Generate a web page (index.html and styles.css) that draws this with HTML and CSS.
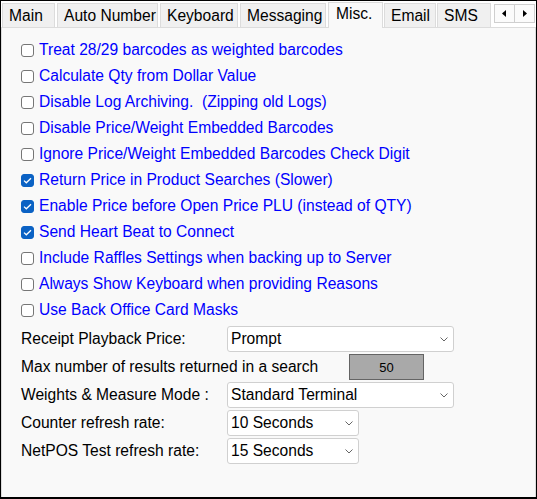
FILE: index.html
```html
<!DOCTYPE html>
<html>
<head>
<meta charset="utf-8">
<link rel="stylesheet" href="styles.css">
</head>
<body>
<div class="frame">
  <div class="tabstrip">
    <div class="tab t-main">Main</div>
    <div class="tab t-auto">Auto Number</div>
    <div class="tab t-key">Keyboard</div>
    <div class="tab t-msg">Messaging</div>
    <div class="tab t-misc active">Misc.</div>
    <div class="tab t-email">Email</div>
    <div class="tab t-sms">SMS</div>
    <div class="scroller">
      <div class="sbtn"><svg width="5" height="7" viewBox="0 0 5 7"><path d="M4 0L0 3.5L4 7Z" fill="#000"/></svg></div>
      <div class="sbtn"><svg width="5" height="7" viewBox="0 0 5 7"><path d="M1 0L5 3.5L1 7Z" fill="#000"/></svg></div>
    </div>
  </div>
  <div class="panel">
    <div class="checks">
      <div class="crow"><span class="cb"></span><span class="ctext">Treat 28/29 barcodes as weighted barcodes</span></div>
      <div class="crow"><span class="cb"></span><span class="ctext">Calculate Qty from Dollar Value</span></div>
      <div class="crow"><span class="cb"></span><span class="ctext">Disable Log Archiving.&nbsp; (Zipping old Logs)</span></div>
      <div class="crow"><span class="cb"></span><span class="ctext">Disable Price/Weight Embedded Barcodes</span></div>
      <div class="crow"><span class="cb"></span><span class="ctext">Ignore Price/Weight Embedded Barcodes Check Digit</span></div>
      <div class="crow"><span class="cb on"><svg width="9" height="7" viewBox="0 0 9 7"><path d="M1 3.6L3.3 5.8L8 1.2" fill="none" stroke="#fff" stroke-width="1.3"/></svg></span><span class="ctext">Return Price in Product Searches (Slower)</span></div>
      <div class="crow"><span class="cb on"><svg width="9" height="7" viewBox="0 0 9 7"><path d="M1 3.6L3.3 5.8L8 1.2" fill="none" stroke="#fff" stroke-width="1.3"/></svg></span><span class="ctext">Enable Price before Open Price PLU (instead of QTY)</span></div>
      <div class="crow"><span class="cb on"><svg width="9" height="7" viewBox="0 0 9 7"><path d="M1 3.6L3.3 5.8L8 1.2" fill="none" stroke="#fff" stroke-width="1.3"/></svg></span><span class="ctext">Send Heart Beat to Connect</span></div>
      <div class="crow"><span class="cb"></span><span class="ctext">Include Raffles Settings when backing up to Server</span></div>
      <div class="crow"><span class="cb"></span><span class="ctext">Always Show Keyboard when providing Reasons</span></div>
      <div class="crow"><span class="cb"></span><span class="ctext">Use Back Office Card Masks</span></div>
    </div>
    <div class="form">
      <div class="frow">
        <span class="label">Receipt Playback Price:</span>
        <div class="select wide"><span>Prompt</span><svg class="chev" width="8" height="5" viewBox="0 0 8 5"><path d="M0.5 0.5L4 4L7.5 0.5" fill="none" stroke="#666" stroke-width="1"/></svg></div>
      </div>
      <div class="frow">
        <span class="label long">Max number of results returned in a search</span>
        <div class="numbox">50</div>
      </div>
      <div class="frow">
        <span class="label">Weights &amp; Measure Mode :</span>
        <div class="select wide"><span>Standard Terminal</span><svg class="chev" width="8" height="5" viewBox="0 0 8 5"><path d="M0.5 0.5L4 4L7.5 0.5" fill="none" stroke="#666" stroke-width="1"/></svg></div>
      </div>
      <div class="frow">
        <span class="label">Counter refresh rate:</span>
        <div class="select short"><span>10 Seconds</span><svg class="chev" width="8" height="5" viewBox="0 0 8 5"><path d="M0.5 0.5L4 4L7.5 0.5" fill="none" stroke="#666" stroke-width="1"/></svg></div>
      </div>
      <div class="frow">
        <span class="label">NetPOS Test refresh rate:</span>
        <div class="select short"><span>15 Seconds</span><svg class="chev" width="8" height="5" viewBox="0 0 8 5"><path d="M0.5 0.5L4 4L7.5 0.5" fill="none" stroke="#666" stroke-width="1"/></svg></div>
      </div>
    </div>
  </div>
</div>
</body>
</html>
```
FILE: styles.css
```css
html, body {
  margin: 0;
  padding: 0;
  background: #000;
}
.frame {
  width: 537px;
  height: 499px;
  box-sizing: border-box;
  border: 1px solid #000;
  border-bottom-width: 2px;
  background: #ffffff;
  font-family: "Liberation Sans", Arial, sans-serif;
  font-size: 15.6px;
  color: #000;
  display: flex;
  flex-direction: column;
  overflow: hidden;
}
.tabstrip {
  height: 26px;
  display: flex;
  align-items: flex-end;
  padding-left: 1px;
  position: relative;
  background: #fff;
}
.tab {
  height: 24px;
  box-sizing: border-box;
  background: #f0f0f0;
  border: 1px solid #dcdcdc;
  border-bottom: none;
  margin-right: 2px;
  line-height: 23px;
  padding-left: 6px;
  white-space: nowrap;
  overflow: hidden;
}
.t-main { width: 53px; }
.t-auto { width: 101px; }
.t-key { width: 78px; }
.t-msg { width: 86px; }
.t-misc { width: 55px; }
.t-email { width: 52px; margin-right: 1px; }
.t-sms { width: 54px; }
.tab.active {
  height: 26px;
  background: #f9f9f9;
  margin-bottom: -1px;
  line-height: 22px;
  position: relative;
  z-index: 1;
  padding-left: 7px;
  margin-right: 1px;
}
.scroller {
  position: absolute;
  right: 1px;
  top: 3px;
  display: flex;
}
.sbtn {
  width: 21px;
  height: 19px;
  box-sizing: border-box;
  border: 1px solid #cfcfcf;
  background: #fbfbfb;
  display: flex;
  align-items: center;
  justify-content: center;
  margin-left: -1px;
}
.panel {
  flex: 1;
  background: #f9f9f9;
  border: 1px solid #dcdcdc;
  border-bottom: none;
  padding: 9px 0 0 19px;
}
.checks {
  display: flex;
  flex-direction: column;
}
.crow {
  height: 26px;
  display: flex;
  align-items: center;
}
.cb {
  width: 13px;
  height: 13px;
  box-sizing: border-box;
  border: 1px solid #767676;
  border-radius: 3px;
  background: #fff;
  margin-right: 5px;
  display: flex;
  align-items: center;
  justify-content: center;
}
.cb.on {
  background: #0b62c4;
  border-color: #0b62c4;
}
.ctext {
  color: #0000ff;
  white-space: nowrap;
}
.form {
  margin-top: 3px;
  display: flex;
  flex-direction: column;
  gap: 2px;
}
.frow {
  height: 26px;
  display: flex;
  align-items: center;
}
.label {
  width: 206px;
  white-space: nowrap;
}
.label.long {
  width: 328px;
}
.select {
  height: 26px;
  box-sizing: border-box;
  background: #fff;
  border: 1px solid #d0d0d0;
  border-radius: 3px;
  display: flex;
  align-items: center;
  justify-content: space-between;
  padding: 0 5px 0 3px;
}
.select.wide { width: 227px; }
.select.short { width: 132px; }
.numbox {
  width: 75px;
  height: 26px;
  box-sizing: border-box;
  background: #a9a9a9;
  border: 1px solid #646464;
  font-size: 13px;
  display: flex;
  align-items: center;
  justify-content: center;
}
```
